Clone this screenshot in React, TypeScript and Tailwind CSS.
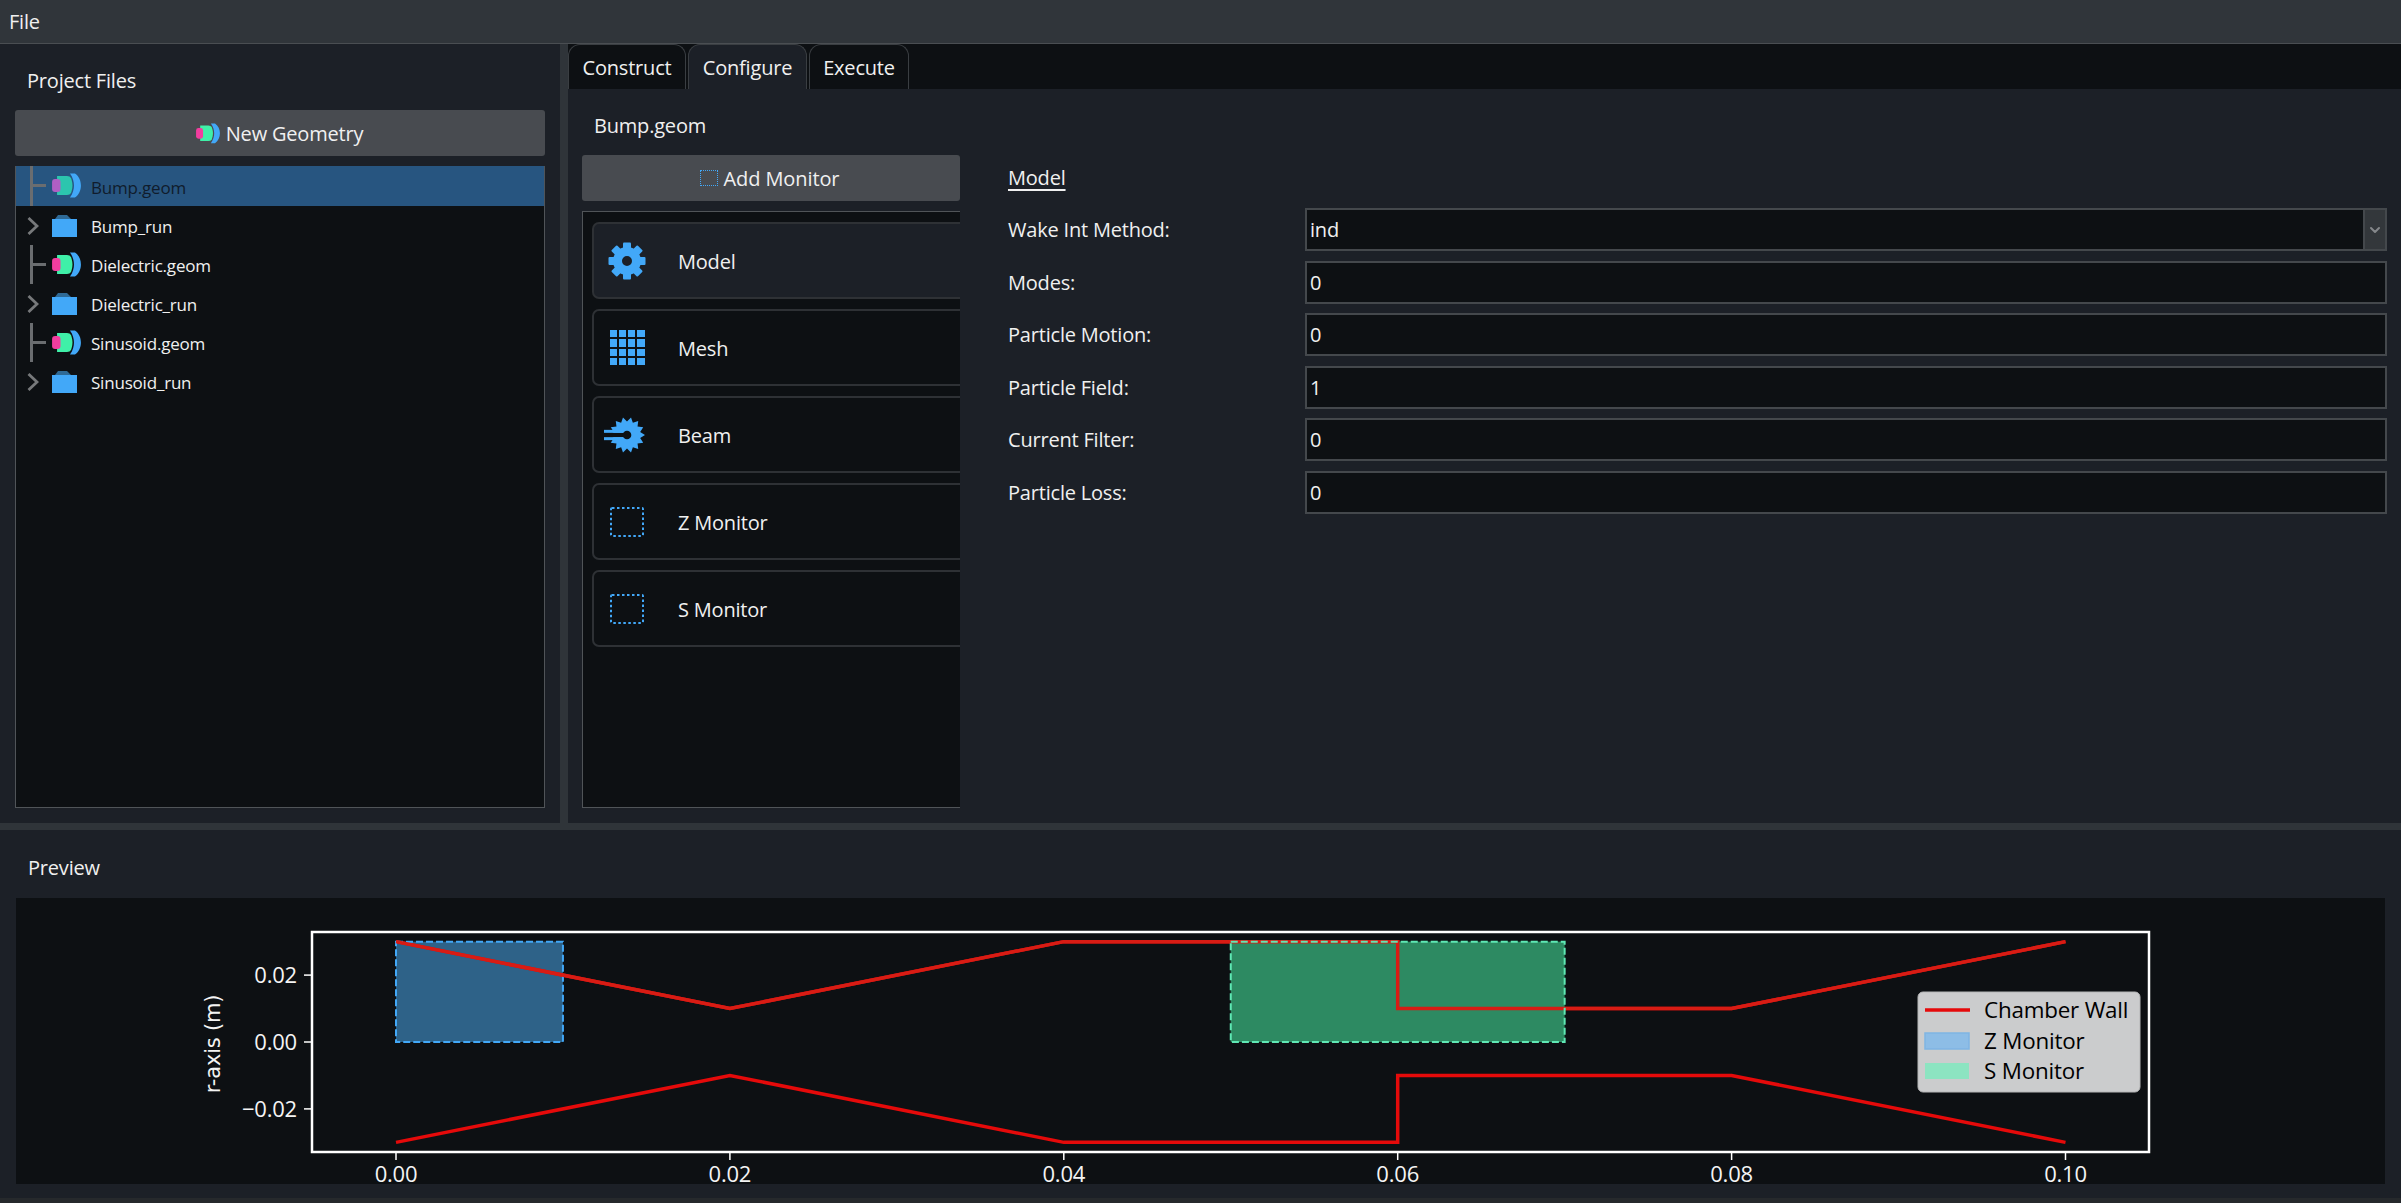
import React from "react";
import { ChevronDown } from "lucide-react";

const fx = (v: number) => 396 + 16695 * v;
const fy = (v: number) => 1042 - 3345 * v;

const wallTop = [[0, 0.03], [0.02, 0.01], [0.04, 0.03], [0.06, 0.03], [0.06, 0.01], [0.08, 0.01], [0.1, 0.03]];
const wallBottom = wallTop.map(([x, y]) => [x, -y]);
const toPoints = (pts: number[][]) => pts.map(([x, y]) => `${fx(x)},${fy(y)}`).join(" ");

const starPoints = () => {
  const out: string[] = [];
  for (let i = 0; i < 28; i++) {
    const r = i % 2 === 0 ? 18 : 13.5;
    const a = (i / 28) * Math.PI * 2;
    out.push(`${(23 + r * Math.cos(a)).toFixed(2)},${(18 + r * Math.sin(a)).toFixed(2)}`);
  }
  return out.join(" ");
};

const GeomIcon = ({ selected, size = 29 }: { selected?: boolean; size?: number }) => (
  <svg width={size} height={size * 0.875} viewBox="0 0 29 25.500" className="shrink-0">
    <path d="M5 3h10q3 0 4 2c1 3 1.500 5 1.500 7.500S20 17 19 20q-1 2-4 2H5z" fill={selected ? "#2cc5ae" : "#3ff0a8"} />
    <rect x="0" y="6" width="8.500" height="13" rx="3" fill={selected ? "#b05fc4" : "#f23d9f"} />
    <path d="M18 .5h5C27 3 29 8 29 12.500S27 22 23 24.500h-5c3-4 4-8.500 4-12S21 4.500 18 .5z" fill="#42a8f8" />
  </svg>
);

const FolderIcon = () => (
  <svg width="25" height="22" viewBox="0 0 25 22" className="shrink-0">
    <path d="M3 4 6 0h9l4 4z" fill="#2f6a96" />
    <rect x="0" y="4" width="25" height="18" fill="#42a8f8" />
  </svg>
);

const Branch = () => (
  <div className="relative w-[22px] h-full shrink-0">
    <div className="absolute left-0 top-0 bottom-0 w-[3px] bg-[#6a6d70]" />
    <div className="absolute left-0 top-[18px] w-[16px] h-[3px] bg-[#6a6d70]" />
  </div>
);

const TreeChevron = () => (
  <div className="w-[25px] -ml-[3px] shrink-0">
    <svg width="12" height="18" viewBox="0 0 12 18">
      <polyline points="1.500,1 10,9 1.500,17" fill="none" stroke="#77797b" strokeWidth="2.800" />
    </svg>
  </div>
);

const TreeRow = ({ label, folder, selected }: { label: string; folder?: boolean; selected?: boolean }) => (
  <div className={`flex items-center pl-[14px] ${selected ? "h-[40px] bg-[#275580] text-[#101c2c]" : "h-[39px] text-[#f0f0f0]"}`}>
    {folder ? <TreeChevron /> : <Branch />}
    {folder ? <FolderIcon /> : <GeomIcon selected={selected} />}
    <span className={`text-[17px] ${selected ? "pt-[3px]" : "pt-[2px]"} ${folder ? "ml-[14px]" : "ml-[10px]"}`}>{label}</span>
  </div>
);

const GearIcon = () => (
  <svg width="38" height="38" viewBox="0 0 38 38">
    {[0, 45, 90, 135, 180, 225, 270, 315].map((a) => (
      <rect key={a} x="15" y="0.500" width="8" height="8" rx="1" fill="#42a8f8" transform={`rotate(${a} 19 19)`} />
    ))}
    <circle cx="19" cy="19" r="9.500" fill="none" stroke="#42a8f8" strokeWidth="9" />
  </svg>
);

const MeshIcon = () => (
  <div className="grid grid-cols-4 gap-[2px] w-[35px] h-[35px] shrink-0">
    {Array.from({ length: 16 }).map((_, i) => (
      <div key={i} className="bg-[#42a8f8]" />
    ))}
  </div>
);

const BeamIcon = () => (
  <svg width="42" height="36" viewBox="0 0 42 36" className="shrink-0 -translate-x-[2px]">
    <polygon points={starPoints()} fill="#42a8f8" />
    <rect x="0" y="15.850" width="22" height="4.300" fill="#0d1013" />
    <rect x="0" y="12.850" width="20" height="3" fill="#42a8f8" />
    <rect x="0" y="20.150" width="20" height="3" fill="#42a8f8" />
    <circle cx="23" cy="18" r="4.300" fill="#0d1013" />
  </svg>
);

const DottedIcon = () => (
  <svg width="34" height="30" viewBox="0 0 34 30" className="shrink-0">
    <rect x="1" y="1" width="32" height="28" rx="1" fill="none" stroke="#42a8f8" strokeWidth="2" strokeDasharray="2.500 2.500" />
  </svg>
);

const cards = [
  { name: "Model", icon: <GearIcon />, active: true },
  { name: "Mesh", icon: <MeshIcon /> },
  { name: "Beam", icon: <BeamIcon /> },
  { name: "Z Monitor", icon: <DottedIcon /> },
  { name: "S Monitor", icon: <DottedIcon /> },
];

const fields = [
  { label: "Modes:", value: "0" },
  { label: "Particle Motion:", value: "0" },
  { label: "Particle Field:", value: "1" },
  { label: "Current Filter:", value: "0" },
  { label: "Particle Loss:", value: "0" },
];

const Chart = () => (
  <svg viewBox="16 898 2369 286" className="block w-full h-full" fontFamily="'Open Sans', sans-serif">
    {/* monitors */}
    <rect x={fx(0)} y={fy(0.03)} width={fx(0.01) - fx(0)} height={fy(0) - fy(0.03)} fill="#2e6288" />
    <polyline points={toPoints(wallBottom)} fill="none" stroke="#e50a0a" strokeWidth="3.500" />
    <polyline points={toPoints(wallTop)} fill="none" stroke="#e50a0a" strokeWidth="3.500" />
    <rect x={fx(0)} y={fy(0.03)} width={fx(0.01) - fx(0)} height={fy(0) - fy(0.03)} fill="none" stroke="#42a8f8" strokeWidth="2" strokeDasharray="7 3" />
    <rect x={fx(0.05)} y={fy(0.03)} width={fx(0.07) - fx(0.05)} height={fy(0) - fy(0.03)} fill="#2d8a62" />
    <polyline points={toPoints(wallTop)} fill="none" stroke="#d81c14" strokeWidth="3.500" />
    <rect x={fx(0.05)} y={fy(0.03)} width={fx(0.07) - fx(0.05)} height={fy(0) - fy(0.03)} fill="none" stroke="#5fe8b4" strokeWidth="2" strokeDasharray="7 3" />
    {/* frame */}
    <rect x="312" y="932" width="1837" height="220" fill="none" stroke="#ffffff" strokeWidth="2.500" />
    {[0, 0.02, 0.04, 0.06, 0.08, 0.1].map((v) => (
      <g key={v}>
        <line x1={fx(v)} x2={fx(v)} y1="1152" y2="1160" stroke="#ffffff" strokeWidth="1.500" />
        <text x={fx(v)} y="1182" textAnchor="middle" fontSize="22" fill="#f4f4f4">{v.toFixed(2)}</text>
      </g>
    ))}
    {[0.02, 0, -0.02].map((v) => (
      <g key={v}>
        <line x1="304" x2="312" y1={fy(v)} y2={fy(v)} stroke="#ffffff" strokeWidth="1.500" />
        <text x="297" y={fy(v) + 8} textAnchor="end" fontSize="22" fill="#f4f4f4">{(v < 0 ? "\u2212" : "") + Math.abs(v).toFixed(2)}</text>
      </g>
    ))}
    <text x="0" y="0" transform="translate(220 1044) rotate(-90)" textAnchor="middle" fontSize="21" fill="#f4f4f4" fontFamily="'DejaVu Sans', sans-serif">r-axis (m)</text>
    {/* legend */}
    <rect x="1918" y="992" width="222" height="100" rx="5" fill="#cbcccd" stroke="#b5b6b7" />
    <line x1="1925" x2="1970" y1="1010" y2="1010" stroke="#e50a0a" strokeWidth="3.500" />
    <rect x="1925" y="1033" width="44" height="16" fill="#8dbde6" stroke="#7fb5e4" strokeWidth="1.500" />
    <rect x="1925" y="1063" width="44" height="16" fill="#8ce4c1" />
    <text x="1984" y="1018" fontSize="22.400" fill="#000000">Chamber Wall</text>
    <text x="1984" y="1049" fontSize="22.400" fill="#000000">Z Monitor</text>
    <text x="1984" y="1079" fontSize="22.400" fill="#000000">S Monitor</text>
  </svg>
);

export default function App() {
  return (
    <div className="w-full h-screen flex flex-col overflow-hidden bg-[#2f3439] text-[#f0f0f0] text-[20px] tracking-[-0.2px] font-['Open_Sans',sans-serif]">
      {/* menu */}
      <div className="h-[44px] shrink-0 flex items-center pl-[9px] bg-[#30353a] border-b border-[#4a4e52]">File</div>

      <div className="h-[779px] shrink-0 flex gap-[8px]">
        {/* project files */}
        <div className="w-[560px] shrink-0 flex flex-col bg-[#1c2027] px-[15px] pb-[15px]">
          <div className="h-[66px] pt-[25px] pl-[12px] leading-6 shrink-0">Project Files</div>
          <button className="h-[46px] shrink-0 flex items-center justify-center gap-[6px] pr-[1px] rounded-[3px] bg-[#484b50]">
            <GeomIcon size={24} />
            <span className="pt-[2px]">New Geometry</span>
          </button>
          <div className="mt-[10px] flex-1 bg-[#0d1013] border border-t-0 border-[#505458]">
            <TreeRow label="Bump.geom" selected />
            <TreeRow label="Bump_run" folder />
            <TreeRow label="Dielectric.geom" />
            <TreeRow label="Dielectric_run" folder />
            <TreeRow label="Sinusoid.geom" />
            <TreeRow label="Sinusoid_run" folder />
          </div>
        </div>

        {/* tabs */}
        <div className="flex-1 min-w-0 flex flex-col bg-[#1c2027]">
          <div className="h-[45px] shrink-0 flex items-end gap-[2px] bg-[#0d1013]">
            <div className="w-[118px] h-[45px] pt-[2px] flex items-center justify-center rounded-t-[12px] border border-b-0 border-[#3a3e42]">Construct</div>
            <div className="w-[119px] h-[45px] pt-[2px] flex items-center justify-center rounded-t-[12px] border border-b-0 border-[#3a3e42] bg-[#1c2027]">Configure</div>
            <div className="w-[100px] h-[45px] pt-[2px] flex items-center justify-center rounded-t-[12px] border border-b-0 border-[#3a3e42]">Execute</div>
          </div>
          <div className="flex-1 flex min-h-0 pb-[15px]">
            <div className="w-[378px] ml-[14px] shrink-0 flex flex-col">
              <div className="h-[66px] pt-[25px] pl-[12px] leading-6 shrink-0">Bump.geom</div>
              <button className="h-[46px] shrink-0 flex items-center justify-center gap-[6px] pr-[3px] rounded-[3px] bg-[#484b50] tracking-[-0.1px]">
                <span className="w-[18px] h-[16px] border border-dotted border-[#42a8f8]" />
                <span className="pt-[2px]">Add Monitor</span>
              </button>
              <div className="mt-[10px] flex-1 overflow-hidden bg-[#0d1013] border border-r-0 border-[#505458] pt-[10px] pl-[9px] flex flex-col gap-[10px]">
                {cards.map((c) => (
                  <div key={c.name} className={`w-[500px] h-[77px] shrink-0 flex items-center rounded-[7px] border-2 border-[#2e3135] ${c.active ? "bg-[#1c2027]" : ""}`}>
                    <div className="w-[38px] ml-[14px] shrink-0 flex items-center justify-center">{c.icon}</div>
                    <span className="ml-[32px] pt-[2px]">{c.name}</span>
                  </div>
                ))}
              </div>
            </div>

            <div className="flex-1 min-w-0 ml-[48px] mr-[14px] pt-[76px]">
              <div className="h-[43px] pt-[1px] leading-6 underline underline-offset-4">Model</div>
              <div className="flex flex-col gap-[9.500px]">
                <div className="flex items-center h-[43px]">
                  <span className="w-[297px] pt-[1px] shrink-0">Wake Int Method:</span>
                  <div className="flex-1 h-full flex items-center justify-between bg-[#0d1013] border-2 border-[#44484c] pl-[3px]">
                    <span className="pt-[1px]">ind</span>
                    <div className="w-[24px] h-[43px] -my-[2px] -mr-[2px] flex items-center justify-center bg-[#33373b] border-2 border-[#44484c]">
                      <ChevronDown className="w-[16px] h-[16px] text-[#85888b]" strokeWidth={3} />
                    </div>
                  </div>
                </div>
                {fields.map((f) => (
                  <div key={f.label} className="flex items-center h-[43px]">
                    <span className="w-[297px] pt-[1px] shrink-0">{f.label}</span>
                    <div className="flex-1 h-full pt-[1px] flex items-center bg-[#0d1013] border-2 border-[#44484c] pl-[3px]">{f.value}</div>
                  </div>
                ))}
              </div>
            </div>
          </div>
        </div>
      </div>

      {/* preview */}
      <div className="mt-[7px] h-[368px] shrink-0 flex flex-col bg-[#1c2027] px-[16px] pb-[14px]">
        <div className="h-[68px] pt-[26px] pl-[12px] leading-6 shrink-0">Preview</div>
        <div className="flex-1 min-h-0 bg-[#0d1013]">
          <Chart />
        </div>
      </div>
      <div className="flex-1 bg-[#26292c]" />
    </div>
  );
}
